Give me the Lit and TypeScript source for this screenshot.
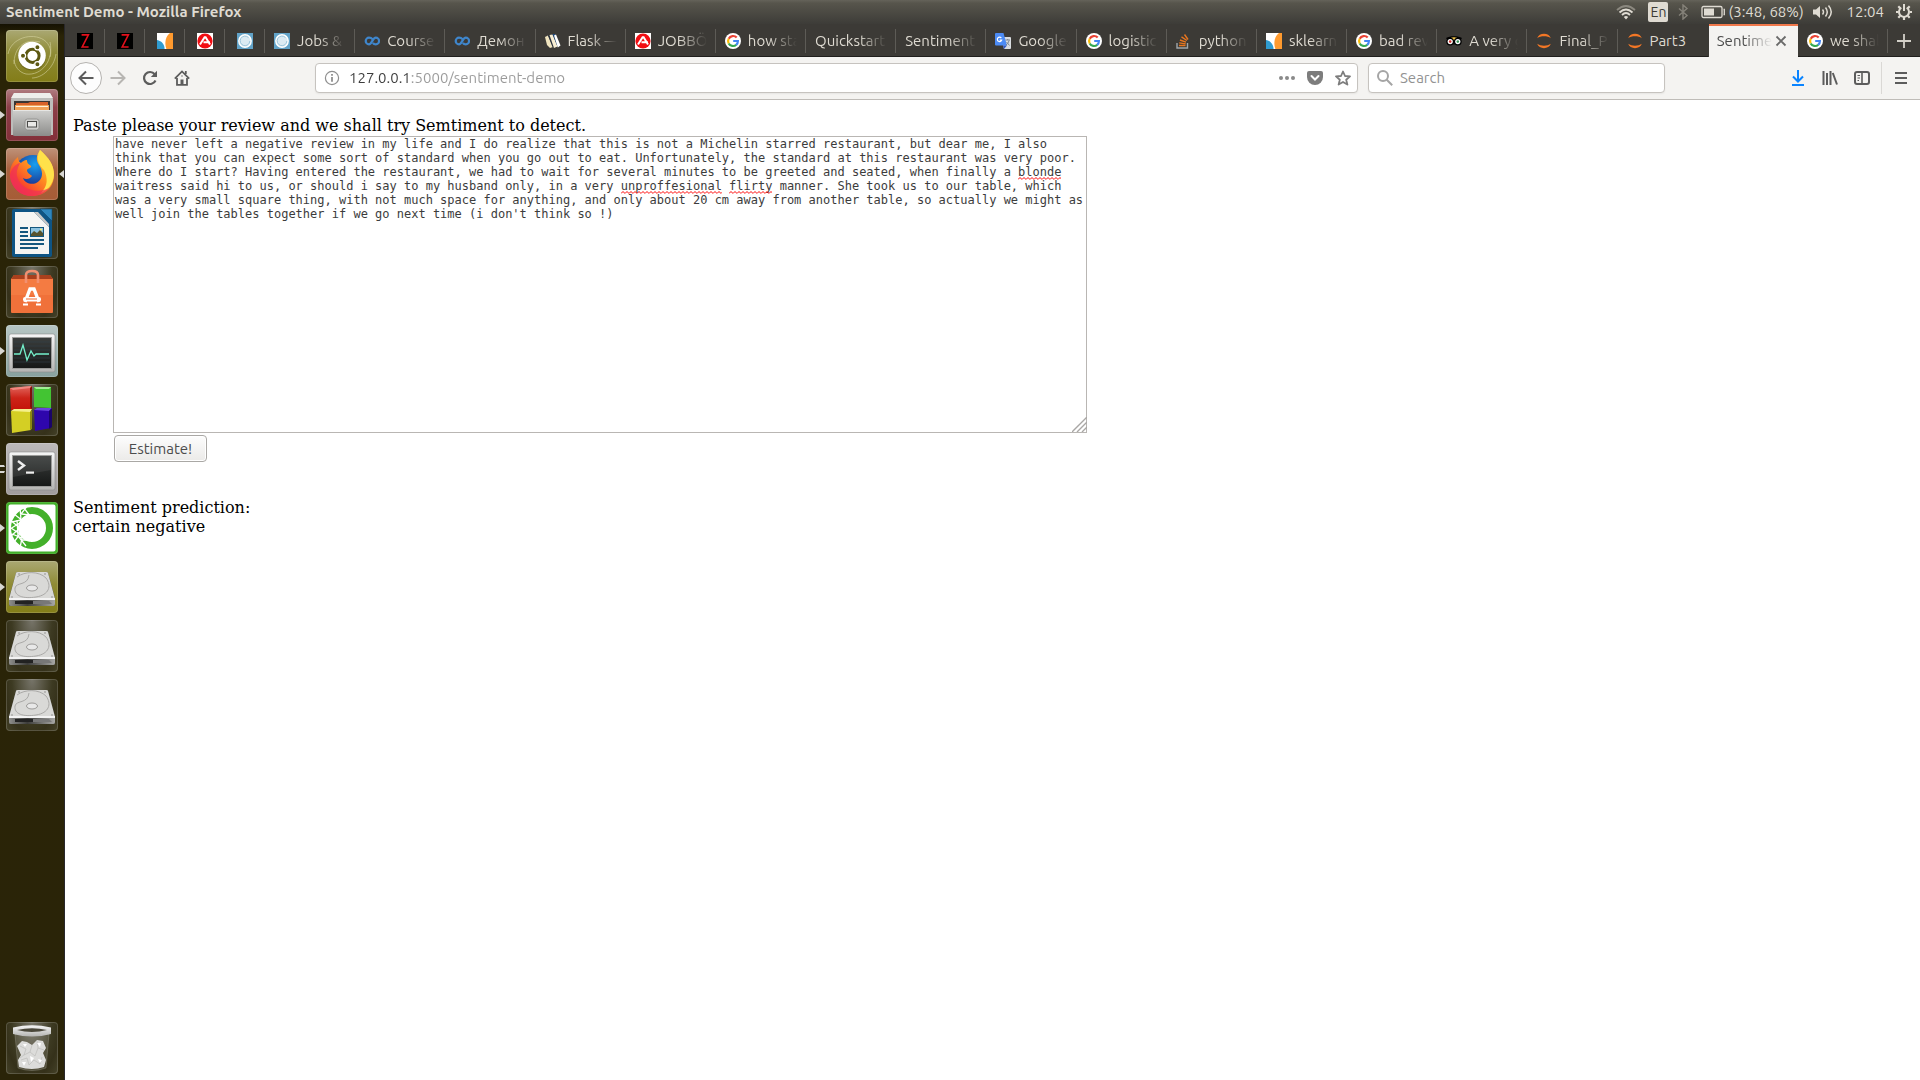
import { LitElement, html, svg, css, nothing, TemplateResult } from "lit";
import { customElement, property, state } from "lit/decorators.js";
import { classMap } from "lit/directives/class-map.js";
import { styleMap } from "lit/directives/style-map.js";

type Art = TemplateResult;

/* ---------- Favicons, drawn on a 16 x 16 grid ---------- */

const favicons: Record<string, Art> = {
  z: svg`<rect width="16" height="16" fill="#000"/>
    <path d="M4.6 1.9H11.400L5.200 14H11.600" fill="none" stroke="#e3101c" stroke-width="1.600"/>`,
  sklearn: svg`<rect width="16" height="16" fill="#fff"/>
    <path d="M16 0V16H9.400C7 9 9 3 13 0Z" fill="#ff9a2e"/>
    <path d="M0 7C5 8 7.500 11.500 7.600 16H0Z" fill="#2f9bd0"/>`,
  agency: svg`<rect width="16" height="16" fill="#fff"/><circle cx="8" cy="8" r="7.600" fill="#f20d12"/>
    <path d="M3 11.500 7.600 4.300H8.600L13 11.500M6.500 9.300H13" fill="none" stroke="#fff" stroke-width="2"/>`,
  ring: svg`<rect width="16" height="16" fill="#62a3c8"/><circle cx="8" cy="8" r="6.200" fill="#dcebf3" stroke="#fff" stroke-width="1.400"/>
    <path d="M11.500 4.600A4.800 4.800 0 1 0 12.800 8" fill="none" stroke="#8dbcd6" stroke-width=".8"/>`,
  infinity: svg`<path d="M8.600 6.200C7.500 5 6.500 4.700 5 4.700A3.300 3.300 0 0 0 5 11.300C8 11.300 8.500 4.700 11.800 4.700A3.200 3.200 0 0 1 11.800 11.300C10.500 11.300 9.500 10.800 8.900 10" fill="none" stroke="#3f86cc" stroke-width="2.200"/>`,
  flask: svg`<path d="M0 4 3 2.500 8 14 5 15 2 12Z" fill="#f0e4bf"/><path d="M3 2.500 4.500 2 9 14.500 7.500 14Z" fill="#2a3340"/>
    <path d="M4.500 2 7.500 1.500 12.500 13.500 9 15Z" fill="#f7edd2"/><path d="M7.500 1H10L13.500 13 12.500 13.500Z" fill="#1d4a80"/>
    <path d="M9 2.500 11 1.500 15.500 12.500 12.800 14.500Z" fill="#fff"/>`,
  google: svg`<circle cx="8" cy="8" r="8" fill="#fff"/>
    <g fill="none" stroke-width="2.200"><path d="M11.700 4.600A4.900 4.900 0 0 0 3.700 5.700" stroke="#ea4335"/>
    <path d="M3.700 5.700A4.900 4.900 0 0 0 3.700 10.400" stroke="#fbbc05"/>
    <path d="M3.700 10.400A4.900 4.900 0 0 0 11.300 11.700" stroke="#34a853"/>
    <path d="M11.200 11.800A4.900 4.900 0 0 0 12.900 8H8.200" stroke="#4285f4"/></g>`,
  translate: svg`<path d="M6 4H15A1 1 0 0 1 16 5V15A1 1 0 0 1 15 16H9Z" fill="#d9dce0"/>
    <path d="M1 0H8.500L12 12.500H1A1 1 0 0 1 0 11.500V1A1 1 0 0 1 1 0Z" fill="#4c8bf5"/><path d="M8 12.500H12L9 16Z" fill="#3058c4"/>
    <path d="M6.300 5A2.200 2.200 0 1 0 6.700 7H4.600" fill="none" stroke="#fff" stroke-width="1.200"/>
    <path d="M10.500 7H15M12.700 6V7M14 7.500C13.500 10 12 11.500 11 12M11.500 9 14.500 12.500" fill="none" stroke="#75808c" stroke-width=".9"/>`,
  stack: svg`<path d="M1 10V15H11.500V10" fill="none" stroke="#a0a6aa" stroke-width="1.400"/>
    <g stroke="#e8761f" stroke-width="1.400"><path d="M3 12.500H9.500M3.200 9.900 9.700 10.900M3.900 7 10 9.100M5.500 3.900 10.900 7.500M8.500 1.500 12 6.500"/></g>`,
  owl: svg`<path d="M0 5C4 2.500 12 2.500 16 5L14.500 7H1.500Z" fill="#000"/><path d="M5 4.800C7 4 9 4 11 4.800L8 8.500Z" fill="#f6c84c"/>
    <circle cx="4.200" cy="8.600" r="3.900" fill="#000"/><circle cx="11.800" cy="8.600" r="3.900" fill="#000"/>
    <circle cx="4.200" cy="8.600" r="2.600" fill="#fff"/><circle cx="11.800" cy="8.600" r="2.600" fill="#fff"/>
    <circle cx="4.200" cy="8.600" r="1.300" fill="#d0312b"/><circle cx="11.800" cy="8.600" r="1.300" fill="#3a8f57"/><path d="M7 10.500H9L8 12.300Z" fill="#000"/>`,
  jupyter: svg`<path d="M1.200 5.200C3 -.6 13 -.6 14.800 5.200 11.500 2.600 4.500 2.600 1.200 5.200Z" fill="#f37726"/>
    <path d="M1.200 10.800C3 16.600 13 16.600 14.800 10.800 11.500 13.400 4.500 13.400 1.200 10.800Z" fill="#f37726"/>`,
};

/* ---------- Launcher pictures, drawn on a 52 x 52 tile ---------- */

const disk: Art = svg`
  <path d="M10 12Q10 11 12 11H40Q42 11 42 12L49 37V44Q49 45 47 45H5Q3 45 3 44V37Z" fill="#55554f"/>
  <path d="M10 12Q10 11 12 11H40Q42 11 42 12L49 38H3Z" fill="#d9d9d7"/>
  <path d="M3 38H49V43Q49 45 47 45H5Q3 45 3 43Z" fill="url(#g-dark)"/>
  <path d="M3 37H49V39H3Z" fill="#f3f3f3"/>
  <path d="M11 16C19 10 33 10 40 17 46 25 43 34 30 36 17 38 8 35 9 27 10 21 22 25 23 14" fill="none" stroke="#aaa9a7" stroke-width="1"/>
  <ellipse cx="26" cy="27" rx="5.500" ry="3" fill="#e8e8e8" stroke="#9c9b99"/>
  <path d="M9 40H27V43H9Z" fill="#222"/><path d="M27 40H43L46 43H27Z" fill="#777"/>
  <g fill="#888"><circle cx="13" cy="13" r=".8"/><circle cx="39" cy="13" r=".8"/><circle cx="6" cy="36" r=".8"/><circle cx="46" cy="36" r=".8"/></g>`;

const screen = (inner: Art): Art => svg`
  <rect x="3" y="9" width="46" height="38" rx="2" fill="url(#g-silver)" stroke="#8b8b8b" stroke-width=".6"/>
  <rect x="6" y="12" width="40" height="32" fill="#9b9b99"/><rect x="7" y="13" width="38" height="30" fill="url(#g-screen)"/>${inner}`;

const launcherArt: Record<string, Art> = {
  dash: svg`
    <g fill="none" stroke="#d5d3a0" stroke-opacity=".6" stroke-width="1"><path d="M2 24C5 8 26 2 38 10 44 14 46 22 44 27M8 34C8 18 18 8 34 12M44 12C48 30 36 46 20 44 12 42 9 36 8 30M50 24C48 38 36 48 26 48"/></g>
    <circle cx="26" cy="26.500" r="14" fill="#4f4b10" fill-opacity=".45"/>
    <circle cx="26" cy="25.500" r="13.800" fill="#fff"/>
    <circle cx="26.500" cy="25.800" r="6.600" fill="none" stroke="#5c5812" stroke-width="3"/>
    <g stroke="#fff" stroke-width="1.200" fill="#5c5812"><circle cx="17" cy="25.800" r="2.600"/><circle cx="31.400" cy="17.300" r="2.600"/><circle cx="31.400" cy="34.300" r="2.600"/></g>`,
  files: svg`
    <path d="M8 4H44L47 10V46H5V10Z" fill="#bdbdbb"/><path d="M8 4H44L47 9H5Z" fill="#eeeeec"/>
    <rect x="8" y="12" width="36" height="12" fill="#3b3634"/>
    <path d="M10 16V14H22L24 13H42V16Z" fill="#d8622a"/><rect x="9" y="16" width="34" height="6" fill="#f0a35a"/><rect x="10" y="17" width="32" height="1" fill="#fff2dd"/>
    <path d="M7 21H45V46Q45 47 43 47H9Q7 47 7 46Z" fill="url(#g-gray)"/><path d="M7 21H45V22H7Z" fill="#e6e6e4"/>
    <rect x="19" y="30" width="14" height="11" rx="2.500" fill="#cfcfcd" stroke="#8b8b89" stroke-width=".8"/>
    <rect x="21.500" y="32.500" width="9" height="5.500" fill="#e9e9e7" stroke="#4a4a48"/>`,
  firefox: svg`
    <circle cx="27" cy="26" r="19" fill="url(#g-globe)"/>
    <path d="M12 9C6 14 3 21 4 29 6 41 15 48 26 48 39 48 48 39 48 27 48 17 43 10 34 2 30 8 30 12 33 17 37 23 37 29 33 33 28 38 19 36 17 30 20 32 24 31 26 28 24 26 21 25 21 22 22 20 26 20 25 18 23 16 21 16 21 12 18 12 16 14 15 15 13 14 12 12 12 9Z" fill="url(#g-fox)"/>
    <path d="M34 2C43 10 48 17 48 27 47 37 41 43 35 45 42 38 42 30 38 22 34 18 29 12 34 2Z" fill="#ffe14a"/>
    <path d="M4 29C6 41 15 48 26 48 34 48 40 44 43 40 32 46 14 42 11 28 10 22 13 18 14 15 9 16 4 22 4 29Z" fill="#ef2f58" fill-opacity=".7"/>`,
  writer: svg`
    <path d="M8 2H36L46 13V48Q46 50 44 50H8Q6 50 6 48V4Q6 2 8 2Z" fill="#0e5484"/>
    <path d="M9 5H28L43 20V47H9Z" fill="#f5f5f3"/><path d="M28 5 43 20V17L32 5Z" fill="#c9c9c7"/>
    <path d="M34 2H46V14Z" fill="#2e86bd" stroke="#0e4870" stroke-width=".6"/>
    <g fill="#15577e"><rect x="14" y="20" width="8" height="2"/><rect x="14" y="24" width="8" height="2"/><rect x="14" y="28" width="8" height="2"/><rect x="14" y="32" width="24" height="2"/><rect x="14" y="36" width="24" height="2"/><rect x="14" y="40" width="18" height="2"/></g>
    <rect x="24.500" y="20.500" width="13" height="9" fill="#8dc3e0" stroke="#15577e"/><path d="M25 29V27L28 24 31 26 34 23 37 26V29Z" fill="#57532e"/><circle cx="35" cy="22.500" r="1" fill="#fff06a"/>`,
  software: svg`
    <path d="M5 13 8 9H44L47 13V46Q47 47 46 47H6Q5 47 5 46Z" fill="#f0713a"/><path d="M5 13 8 9H44L47 13Z" fill="#a9401d"/>
    <path d="M5 13H47V29H5Z" fill="#f47b42"/>
    <path d="M20 17V9Q20 5 26 5 32 5 32 9V17" fill="none" stroke="#f29070" stroke-width="2.600"/>
    <path d="M19 36 24 23H28L33 36" fill="none" stroke="#fff" stroke-width="3.400"/><rect x="17" y="31" width="18" height="4.500" rx="2" fill="#fff"/><path d="M20 33H31" stroke="#ef6a35"/>
    <path d="M17 38.500H22M30 38.500H35" stroke="#fff" stroke-width="2"/>`,
  monitor: screen(svg`<g stroke="#33424a" stroke-width=".6"><path d="M8 17H44M8 21H44M8 25H44M8 33H44M8 37H44"/></g>
    <path d="M8 29H14L17 20 21 35 25 26 28 31 30 29H43" fill="none" stroke="#74efcb" stroke-width="1.300"/>`),
  cubes: svg`
    <path d="M4 4 26 2V25L5 26Z" fill="url(#g-red)"/><path d="M4 4 26 2 24 4 7 6Z" fill="#f08a80"/><path d="M24 4 26 2V25L24 23Z" fill="#80100a"/>
    <path d="M28 3 45 3V24L28 23Z" fill="#43c433"/><path d="M28 3H45L43 5H30Z" fill="#a2ee94"/>
    <path d="M5 27 25 26V46L6 49Z" fill="#d4cf24"/><path d="M5 27 8 25 26 25 24 28Z" fill="#f4f08a"/><path d="M24 28 26 26V45L24 46Z" fill="#8c8910"/>
    <path d="M28 26 45 25V44L29 47Z" fill="#2e06ac"/><path d="M28 26 31 24H46L43 27Z" fill="#6844dc"/><path d="M43 27 46 24V43L43 45Z" fill="#1a0468"/>`,
  terminal: screen(svg`<path d="M7 13H45V27L7 34Z" fill="#fff" fill-opacity=".07"/>
    <path d="M12 18 18 22.500 12 27" fill="none" stroke="#eee" stroke-width="2.400"/><rect x="20" y="28.500" width="8" height="2.200" fill="#eee"/>`),
  anaconda: svg`
    <rect x="1.500" y="1.500" width="49" height="49" rx="3" fill="#fff" stroke="#43b02a" stroke-width="2"/>
    <circle cx="26" cy="26" r="17.500" fill="none" stroke="#43b02a" stroke-width="7"/>
    <g fill="none" stroke="#fff" stroke-width="1.300"><path d="M4 18 14 26 5 34M8 12 17 19 4 27M14 5 15 18 6 20M22 3 15 12 24 13M5 26 14 32 8 40M11 18 12 34 20 44M6 32 16 36 14 46M18 6 24 14M15 38 22 38"/></g>`,
  disk,
  trash: svg`
    <path d="M9 12 12 46Q26 51 40 46L43 12Z" fill="#fff" fill-opacity=".12" stroke="#fff" stroke-opacity=".25" stroke-width=".7"/>
    <path d="M11 24 16 19 21 20 26 23 31 18 37 19 40 26 37 31 40 38 38 45Q26 49 13 45L12 38 15 33Z" fill="#dcdcda"/>
    <path d="M14 24 20 27 18 33 24 30 29 34 32 26 38 28M15 38 21 36 23 43 28 38 34 42 36 35M26 23 24 30M31 19 32 26M18 33 14 36" fill="none" stroke="#bdbdba" stroke-width=".7"/>
    <path d="M17 22 21 22 19 25ZM31 21 35 21 34 25ZM24 34 28 36 25 40ZM16 40 20 40 18 44ZM32 37 36 38 34 41Z" fill="#fff"/>
    <ellipse cx="26" cy="8" rx="17" ry="3.500" fill="#4a473a"/>
    <path d="M7 5.500Q26 1 45 5.500V12Q26 17 7 12ZM11 8Q26 12 41 8 26 4.500 11 8Z" fill="url(#g-silver)" fill-rule="evenodd"/>`,
};

const gradients: Art = svg`<defs>
  <linearGradient id="g-silver" x2="0" y2="1"><stop stop-color="#f6f6f6"/><stop offset="1" stop-color="#b4b4b2"/></linearGradient>
  <linearGradient id="g-gray" x2="0" y2="1"><stop stop-color="#cfcfcd"/><stop offset="1" stop-color="#8c8c8a"/></linearGradient>
  <linearGradient id="g-dark" x2="1" y2="0"><stop stop-color="#8f8f8d"/><stop offset=".4" stop-color="#3c3c3a"/><stop offset="1" stop-color="#a7a7a5"/></linearGradient>
  <linearGradient id="g-screen" x2="0" y2="1"><stop stop-color="#3a3d3c"/><stop offset="1" stop-color="#161817"/></linearGradient>
  <linearGradient id="g-red" x2="0" y2="1"><stop stop-color="#e2675e"/><stop offset=".5" stop-color="#cc2318"/><stop offset="1" stop-color="#c4140a"/></linearGradient>
  <radialGradient id="g-globe" cx=".55" cy=".25"><stop stop-color="#17a0f0"/><stop offset="1" stop-color="#1b3f9c"/></radialGradient>
  <linearGradient id="g-fox" x1=".9" y1="0" x2=".1" y2=".9"><stop stop-color="#ffe648"/><stop offset=".45" stop-color="#ff9320"/><stop offset=".8" stop-color="#f8482c"/><stop offset="1" stop-color="#e8255c"/></linearGradient>
</defs>`;

/* ---------- Data ---------- */

interface Launcher { name: string; art: string; tone: string; running?: 1 | 2; focused?: boolean }

const launchers: Launcher[] = [
  { name: "Search your computer", art: "dash", tone: "olive" },
  { name: "Files", art: "files", tone: "wine", running: 1 },
  { name: "Firefox", art: "firefox", tone: "rust", running: 1, focused: true },
  { name: "Writer", art: "writer", tone: "plain" },
  { name: "Software", art: "software", tone: "plain" },
  { name: "System Monitor", art: "monitor", tone: "teal", running: 1 },
  { name: "Cubes", art: "cubes", tone: "plain" },
  { name: "Terminal", art: "terminal", tone: "gray", running: 2 },
  { name: "Anaconda", art: "anaconda", tone: "green", running: 1 },
  { name: "Disk 1", art: "disk", tone: "olive", running: 1 },
  { name: "Disk 2", art: "disk", tone: "plain" },
  { name: "Disk 3", art: "disk", tone: "plain" },
];

interface Tab { title?: string; icon?: string; short?: boolean }

const pinned: Tab[] = [{ icon: "z" }, { icon: "z" }, { icon: "sklearn" }, { icon: "agency" }, { icon: "ring" }];

const tabs: Tab[] = [
  { icon: "ring", title: "Jobs &" },
  { icon: "infinity", title: "Course" },
  { icon: "infinity", title: "Демон" },
  { icon: "flask", title: "Flask —" },
  { icon: "agency", title: "JOBBÖ" },
  { icon: "google", title: "how sta" },
  { title: "Quickstart" },
  { title: "Sentiment" },
  { icon: "translate", title: "Google" },
  { icon: "google", title: "logistic" },
  { icon: "stack", title: "python" },
  { icon: "sklearn", title: "sklearn" },
  { icon: "google", title: "bad rev" },
  { icon: "owl", title: "A very g" },
  { icon: "jupyter", title: "Final_P" },
  { icon: "jupyter", title: "Part3", short: true },
  { title: "Sentime" },
  { icon: "google", title: "we shal" },
];

const reviewLines = [
  "have never left a negative review in my life and I do realize that this is not a Michelin starred restaurant, but dear me, I also",
  "think that you can expect some sort of standard when you go out to eat. Unfortunately, the standard at this restaurant was very poor.",
  "Where do I start? Having entered the restaurant, we had to wait for several minutes to be greeted and seated, when finally a blonde",
  "waitress said hi to us, or should i say to my husband only, in a very unproffesional flirty manner. She took us to our table, which",
  "was a very small square thing, with not much space for anything, and only about 20 cm away from another table, so actually we might as",
  "well join the tables together if we go next time (i don't think so !)",
];

const misspelled = ["blonde", "unproffesional", "flirty"];

/* ---------- Launcher ---------- */

@customElement("app-launcher")
export class AppLauncher extends LitElement {
  static styles = css`
    :host {
      display: flex;
      flex-direction: column;
      gap: 7px;
      padding: 6px 0;
      background: linear-gradient(#151203, #2a2407 12px, #2a2408);
      border-right: 1px solid #28272b;
    }
    .item { display: grid; grid-template-columns: 6px 52px 6px; align-items: center; }
    .last { margin-top: auto; }
    .mark { width: 6px; height: 12px; display: block; fill: #d8d7d2; }
    .tile {
      width: 52px; height: 52px; padding: 0; border: 0; border-radius: 4px; overflow: hidden;
      box-shadow: inset 0 0 0 1px rgba(255, 255, 255, 0.16);
    }
    .art { display: block; width: 52px; height: 52px; }
    .plain { background: radial-gradient(ellipse at 50% 0, #77756a, #3d3a22 55%, #35311a 75%, #454229); }
    .olive { background: linear-gradient(#aaa873, #8f8b35 45%, #837d18); }
    .wine { background: linear-gradient(#b07c81, #8c3f48 35%, #832f39); }
    .rust { background: linear-gradient(#bf9279, #a9633f 40%, #a65c36); }
    .teal { background: linear-gradient(#b7c6c4, #88a19e); }
    .gray { background: linear-gradient(#bcb9b9, #a09c9c); }
    .green { background: #43b02a; }
  `;

  private item(l: Launcher, last = false) {
    const mark = l.running === 2
      ? svg`<path d="M0 2H4L5 4H0ZM0 8H5L4 10H0Z"/>`
      : svg`<path d="M0 2 5 6 0 10Z"/>`;
    return html`<div class=${classMap({ item: true, last })}>
      <svg class="mark" viewBox="0 0 6 12">${l.running ? mark : nothing}</svg>
      <button class="tile ${l.tone}" aria-label=${l.name}>
        <svg class="art" viewBox="0 0 52 52">${gradients}${launcherArt[l.art]}</svg>
      </button>
      <svg class="mark" viewBox="0 0 6 12">${l.focused ? svg`<path d="M6 2 1 6 6 10Z"/>` : nothing}</svg>
    </div>`;
  }

  render() {
    return html`${launchers.map((l) => this.item(l))}${this.item({ name: "Trash", art: "trash", tone: "plain" }, true)}`;
  }
}

/* ---------- Desktop panel ---------- */

@customElement("top-panel")
export class TopPanel extends LitElement {
  static styles = css`
    :host {
      display: flex; align-items: center; justify-content: space-between;
      height: 24px; padding: 0 8px 0 6px; box-sizing: border-box;
      background: linear-gradient(#65635a, #57554c 3px, #3d3c38);
      color: #dfdbd2;
      font: 15px/24px "Ubuntu", "Noto Sans", sans-serif;
    }
    .title { font-weight: 700; }
    .tray { display: flex; align-items: center; }
    .wifi { width: 20px; height: 16px; margin-right: 12px; }
    .lang {
      width: 20px; height: 20px; margin-right: 9px; border-radius: 2px; text-align: center;
      background: #dfdbd2; color: #3c3b37; font-size: 14px; line-height: 20px;
    }
    .bt { width: 12px; height: 16px; margin-right: 12px; }
    .battery { width: 24px; height: 14px; margin-right: 3px; }
    .level { width: 74px; white-space: nowrap; margin-right: 11px; }
    .sound { width: 20px; height: 16px; margin-right: 13px; }
    .clock { margin-right: 12px; }
    .gear { width: 16px; height: 16px; }
    svg { display: block; flex: none; }
  `;

  render() {
    return html`
      <div class="title">Sentiment Demo - Mozilla Firefox</div>
      <div class="tray">
        <svg class="wifi" viewBox="0 0 20 16" fill="none" stroke-width="1.800">
          <path d="M1 6Q10-2 19 6" stroke="#8b887f"/><path d="M3.500 8.500Q10 2.500 16.500 8.500M6 11Q10 7 14 11" stroke="#dfdbd2"/>
          <path d="M7.800 13 10 15.500 12.200 13Q10 11 7.800 13Z" fill="#dfdbd2"/></svg>
        <span class="lang">En</span>
        <svg class="bt" viewBox="0 0 12 16" fill="none" stroke="#858279" stroke-width="1.400"><path d="M2 4.500 10 11.500 6 15V1L10 4.500 2 11.500"/></svg>
        <svg class="battery" viewBox="0 0 24 14" fill="none" stroke="#dfdbd2" stroke-width="1.300">
          <rect x="1" y="1.500" width="20" height="11" rx="1.500"/><path d="M22.500 4.500H23.300V9.500H22.500"/><rect x="3" y="3.500" width="10" height="7" fill="#dfdbd2" stroke="none"/></svg>
        <span class="level">(3:48, 68%)</span>
        <svg class="sound" viewBox="0 0 20 16" fill="none" stroke="#dfdbd2" stroke-width="1.500">
          <path d="M0 5.500H3L7 2V14L3 10.500H0Z" fill="#dfdbd2" stroke="none"/><path d="M9.500 5.500Q11.500 8 9.500 10.500M12.500 3.500Q16 8 12.500 12.500M15.500 1.500Q21 8 15.500 14.500"/></svg>
        <span class="clock">12:04</span>
        <svg class="gear" viewBox="0 0 16 16" fill="none" stroke="#dfdbd2">
          <path d="M5.300 3.700A5 5 0 1 0 10.700 3.700" stroke-width="2"/><path d="M8 0V7" stroke-width="2"/>
          <path d="M2.300 2.300 4.200 4.200M0 8H2.500M2.300 13.700 4.200 11.800M8 13V16M13.700 13.700 11.800 11.800M16 8H13.500M13.700 2.300 11.800 4.200" stroke-width="2.200"/></svg>
      </div>`;
  }
}

/* ---------- Browser tab strip and toolbar ---------- */

@customElement("browser-chrome")
export class BrowserChrome extends LitElement {
  @property({ type: Number }) active = 16;

  static styles = css`
    :host { display: block; font: 15px/20px "Ubuntu", "Noto Sans", sans-serif; }
    button { font: inherit; border: 0; padding: 0; background: none; color: inherit; }
    svg { display: block; flex: none; }
    .strip {
      display: flex; height: 33px; background: #3c3a36; color: #dfdbd2;
      box-shadow: inset 0 -1px #1f1e1c;
    }
    .tab {
      position: relative; display: flex; align-items: center; flex: 1 1 0; min-width: 0;
      gap: 7px; padding: 0 9px; text-align: left;
    }
    .tab::after {
      content: ""; position: absolute; right: 0; top: 5px; bottom: 4px; width: 1px; background: #5d5b56;
    }
    .pinned { flex: 0 0 40px; padding: 0 12px; }
    .bare::after { display: none; }
    .active {
      background: #f4f3f1; color: #4c4c4c; box-shadow: inset 0 2px #f0784b;
      border-left: 1px solid #3c3a36; padding-left: 8px; gap: 1px;
    }
    .icon { width: 16px; height: 16px; }
    .label {
      flex: 1 1 0; min-width: 0; overflow: hidden; white-space: nowrap;
      mask-image: linear-gradient(to left, transparent, #000 28px);
    }
    .whole { mask-image: none; }
    .close { width: 16px; height: 16px; }
    .add { flex: 0 0 32px; display: grid; place-items: center; }
    .bar {
      display: flex; align-items: center; height: 43px; box-sizing: border-box; padding: 0 3px 0 5px;
      background: #f4f3f1; border-bottom: 1px solid #bfbcb8; color: #5c5c5c;
    }
    .tool { width: 32px; height: 32px; display: grid; place-items: center; flex: none; }
    .back { border: 1px solid #b5b3b0; border-radius: 50%; background: #fdfdfd; box-sizing: border-box; }
    .dim { color: #b7b5b2; }
    .field {
      display: flex; align-items: center; height: 30px; box-sizing: border-box; background: #fff;
      border: 1px solid #c6c3bf; border-radius: 4px; box-shadow: 0 1px 2px rgba(0, 0, 0, 0.06);
    }
    .address { flex: 1027 1 0; margin-left: 117px; padding: 0 6px 0 8px; gap: 9px; }
    .action { margin-left: 3px; }
    .search { flex: 279 1 0; margin: 0 117px 0 10px; padding: 0 8px; gap: 7px; }
    .input {
      flex: 1 1 0; min-width: 0; border: 0; outline: 0; padding: 0; background: none;
      font: 15px/20px "Ubuntu", "Noto Sans", sans-serif; color: #9a9a9a;
    }
    .url {
      background: linear-gradient(to right, #3c3c3c 60px, #9a9a9a 60px);
      background-clip: text; -webkit-background-clip: text; -webkit-text-fill-color: transparent;
    }
    .input::placeholder { color: #929292; opacity: 1; }
    .blue { color: #0a84ff; }
    .rule { width: 1px; height: 32px; margin: 0 3px; background: #dad8d5; }
  `;

  private tab(t: Tab, i: number, isPinned: boolean) {
    const active = !isPinned && i === this.active;
    const bare = active || (!isPinned && i === this.active - 1);
    return html`<button role="tab" aria-selected=${active} class=${classMap({ tab: true, pinned: isPinned, active, bare })}
        @click=${() => { if (!isPinned) this.active = i; }}>
      ${t.icon ? html`<svg class="icon" viewBox="0 0 16 16">${favicons[t.icon]}</svg>` : nothing}
      ${t.title ? html`<span class=${classMap({ label: true, whole: !!t.short })}>${t.title}</span>` : nothing}
      ${active ? html`<svg class="close" viewBox="0 0 16 16"><path d="M3.500 3.500 12.500 12.500M12.500 3.500 3.500 12.500" stroke="#6a6a6a" stroke-width="1.800"/></svg>` : nothing}
    </button>`;
  }

  private glyph(art: Art) {
    return html`<svg class="icon" viewBox="0 0 16 16" fill="none" stroke="currentColor" stroke-width="2">${art}</svg>`;
  }

  render() {
    return html`
      <div class="strip" role="tablist">
        ${pinned.map((t, i) => this.tab(t, i, true))}${tabs.map((t, i) => this.tab(t, i, false))}
        <button class="add" aria-label="New tab"><svg class="icon" viewBox="0 0 16 16"><path d="M8 1V15M1 8H15" stroke="#d3d0c8" stroke-width="1.800"/></svg></button>
      </div>
      <div class="bar">
        <button class="tool back" aria-label="Back">${this.glyph(svg`<path d="M15.500 8H1.500M8 1.500 1.500 8 8 14.500"/>`)}</button>
        <button class="tool dim" aria-label="Forward">${this.glyph(svg`<path d="M.5 8H14.500M8 1.500 14.500 8 8 14.500"/>`)}</button>
        <button class="tool" aria-label="Reload">${this.glyph(svg`<path d="M12.700 4.200A6 6 0 1 0 13.500 10.500" stroke-width="2.200"/><path d="M15 .8V7H8.800Z" fill="currentColor" stroke="none"/>`)}</button>
        <button class="tool" aria-label="Home">${this.glyph(svg`<path d="M.8 8.600 8 1.400 15.200 8.600" stroke-width="1.800"/><path d="M3 8V14.800H13V8M11.800 1V4" stroke-width="1.800"/><path d="M6.500 14.500V9.500H9.500V14.500Z" fill="currentColor" stroke="none"/><circle cx="8" cy="6" r=".7" stroke="none" fill="currentColor"/>`)}</button>
        <div class="field address">
          ${this.glyph(svg`<g stroke="#8f8f8f" stroke-width="1.200"><circle cx="8" cy="8" r="6.600"/></g><path d="M8 7V11.800M8 4V5.800" stroke="#8f8f8f" stroke-width="1.800"/>`)}
          <input class="input url" aria-label="Address" spellcheck="false" .value=${"127.0.0.1:5000/sentiment-demo"} />
          <button class="action" aria-label="Page actions">${this.glyph(svg`<g fill="#8a8a8a" stroke="none"><circle cx="2" cy="8" r="2"/><circle cx="8" cy="8" r="2"/><circle cx="14" cy="8" r="2"/></g>`)}</button>
          <button class="action" aria-label="Save to Pocket">${this.glyph(svg`<path d="M2 1H14A2 2 0 0 1 16 3V7A8 8 0 0 1 0 7V3A2 2 0 0 1 2 1Z" fill="#7d7d7d" stroke="none"/><path d="M4.500 6 8 9.500 11.500 6" stroke="#fff" stroke-linecap="round"/>`)}</button>
          <button class="action" aria-label="Bookmark">${this.glyph(svg`<path d="M8 1.500 10 6 15 6.400 11.200 9.700 12.400 14.600 8 12 3.600 14.600 4.800 9.700 1 6.400 6 6Z" stroke="#7d7d7d" stroke-width="1.800" stroke-linejoin="round"/>`)}</button>
        </div>
        <div class="field search">
          ${this.glyph(svg`<g stroke="#a5a5a5"><circle cx="6" cy="6" r="5"/><path d="M9.500 9.500 15.200 15.200"/></g>`)}
          <input class="input" aria-label="Search" placeholder="Search" />
        </div>
        <button class="tool blue" aria-label="Downloads">${this.glyph(svg`<path d="M8 0V11M3 6.500 8 11.500 13 6.500M2 15H14"/>`)}</button>
        <button class="tool" aria-label="Library">${this.glyph(svg`<path d="M1.500 1V15M5 3V15M8.500 1V15M10.800 3 15 14.500"/>`)}</button>
        <button class="tool" aria-label="Sidebars">${this.glyph(svg`<rect x="1" y="2" width="14" height="12" rx="2"/><path d="M8 2V14" stroke-width="1.600"/><path d="M3.500 5.500H6M3.500 8H6M3.500 10.500H5" stroke-width="1"/>`)}</button>
        <span class="rule"></span>
        <button class="tool" aria-label="Menu">${this.glyph(svg`<path d="M2 3H14M2 8H14M2 13H14"/>`)}</button>
      </div>`;
  }
}

/* ---------- Web page ---------- */

@customElement("sentiment-page")
export class SentimentPage extends LitElement {
  @state() private verdict = "certain negative";

  static styles = css`
    :host {
      display: block; padding: 16px 8px; background: #fff; color: #000;
      font: 16px/19px "DejaVu Serif", serif;
    }
    .prompt { display: block; margin-bottom: 1px; }
    .form { display: flex; flex-direction: column; align-items: flex-start; margin: 0 0 0 40px; }
    .box { position: relative; width: 974px; max-width: 100%; }
    .mono, .review { font: 12px/14px "DejaVu Sans Mono", monospace; }
    .review {
      display: block; width: 100%; height: 297px; box-sizing: border-box; resize: none; outline: 0;
      margin: 0; padding: 0 1px; border: 1px solid #b9b6b3; color: #3c3c3c; background: #fff; overflow: hidden;
    }
    .marks { position: absolute; inset: 1px 2px; pointer-events: none; }
    .wave { position: absolute; height: 3px; }
    .zigzag { display: block; width: 100%; height: 3px; }
    .grip { position: absolute; right: 0; bottom: 1px; width: 15px; height: 15px; }
    .go {
      margin: 2px 0 0 1px; height: 27px; width: 93px; padding: 0; color: #4c4c4c;
      font: 15px/20px "Ubuntu", "Noto Sans", sans-serif;
      border: 1px solid #aaa8a5; border-radius: 4px; background: linear-gradient(#fdfdfd, #ebeae8);
      box-shadow: inset 0 0 0 1px #fff;
    }
    .result { margin: 36px 0 0; }
    .line { display: block; }
  `;

  private waves() {
    return reviewLines.flatMap((line, row) =>
      misspelled.filter((w) => line.includes(w)).map((w) => {
        const place = {
          left: `${line.indexOf(w)}ch`,
          top: `${row * 14 + 12}px`,
          width: `${w.length}ch`,
        };
        return html`<span class="wave" style=${styleMap(place)}><svg class="zigzag">
          <defs><pattern id="zig" width="4" height="3" patternUnits="userSpaceOnUse"><path d="M-1 2.500 0 2.500 2 .5 4 2.500 5 1.500" fill="none" stroke="#f00"/></pattern></defs>
          <rect width="100%" height="3" fill="url(#zig)"/></svg></span>`;
      }),
    );
  }

  render() {
    return html`
      <label class="prompt" for="review">Paste please your review and we shall try Semtiment to detect.</label>
      <form class="form" @submit=${(e: Event) => e.preventDefault()}>
        <div class="box">
          <textarea id="review" class="review" spellcheck="false" .value=${reviewLines.join(" ")}></textarea>
          <div class="marks mono">${this.waves()}</div>
          <svg class="grip" viewBox="0 0 15 15" stroke="#a9a7a5" stroke-width="1.400"><path d="M0 15 15 0M5 15 15 5M10 15 15 10"/></svg>
        </div>
        <button class="go">Estimate!</button>
      </form>
      <p class="result"><span class="line">Sentiment prediction:</span><output class="line" for="review">${this.verdict}</output></p>`;
  }
}

@customElement("app-root")
export class AppRoot extends LitElement {
  static styles = css`
    :host { display: grid; grid-template-rows: auto 1fr; min-height: 100vh; background: #fff; }
    .desk { display: grid; grid-template-columns: auto minmax(0, 1fr); }
  `;

  render() {
    return html`<top-panel></top-panel>
      <div class="desk">
        <app-launcher></app-launcher>
        <main><browser-chrome></browser-chrome><sentiment-page></sentiment-page></main>
      </div>`;
  }
}
